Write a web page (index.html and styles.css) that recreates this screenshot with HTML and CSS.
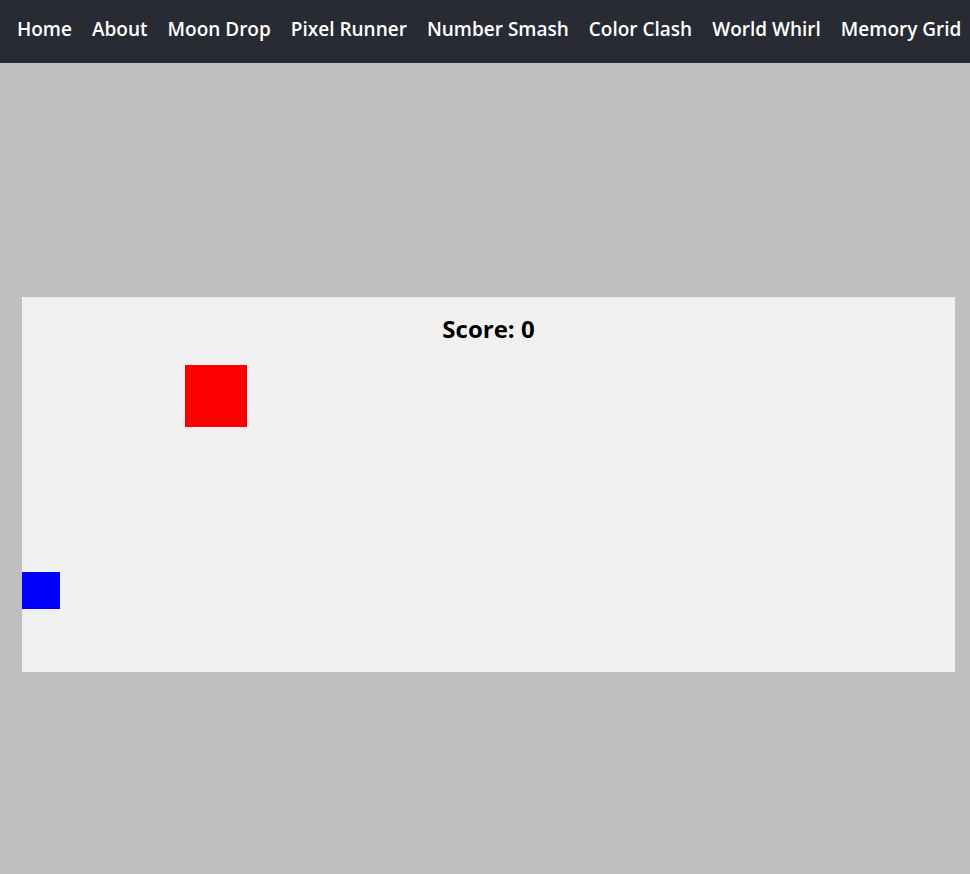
FILE: index.html
```html
<!DOCTYPE html>
<html>
<head>
<meta charset="utf-8">
<link rel="stylesheet" href="styles.css">
</head>
<body>
<nav class="nav">
  <a class="nav-link">Home</a>
  <a class="nav-link">About</a>
  <a class="nav-link">Moon Drop</a>
  <a class="nav-link">Pixel Runner</a>
  <a class="nav-link">Number Smash</a>
  <a class="nav-link">Color Clash</a>
  <a class="nav-link">World Whirl</a>
  <a class="nav-link">Memory Grid</a>
</nav>
<main class="stage">
  <div class="game">
    <div class="score">Score: 0</div>
    <div class="target"></div>
    <div class="player"></div>
  </div>
</main>
</body>
</html>
```

FILE: styles.css
```css
html, body {
  margin: 0;
  padding: 0;
}
body {
  background: #bfbfbf;
  font-family: "Open Sans", "Noto Sans", sans-serif;
  height: 874px;
  overflow: hidden;
}
.nav {
  background: #282b33;
  height: 57px;
  padding-bottom: 6px;
  display: flex;
  align-items: center;
  padding-left: 17px;
  gap: 20px;
  white-space: nowrap;
}
.nav-link {
  color: #ffffff;
  font-weight: 600;
  font-size: 19px;
}
.stage {
  padding-top: 234px;
  padding-left: 22px;
}
.game {
  position: relative;
  width: 933px;
  height: 375px;
  background: #f0f0f0;
}
.score {
  text-align: center;
  font-weight: 700;
  font-size: 24px;
  line-height: 32px;
  padding-top: 16px;
  padding-left: 0;
  color: #000;
}
.target {
  position: absolute;
  left: 163px;
  top: 68px;
  width: 62px;
  height: 62px;
  background: #ff0000;
}
.player {
  position: absolute;
  left: 0;
  top: 275px;
  width: 38px;
  height: 37px;
  background: #0000ff;
}
```
